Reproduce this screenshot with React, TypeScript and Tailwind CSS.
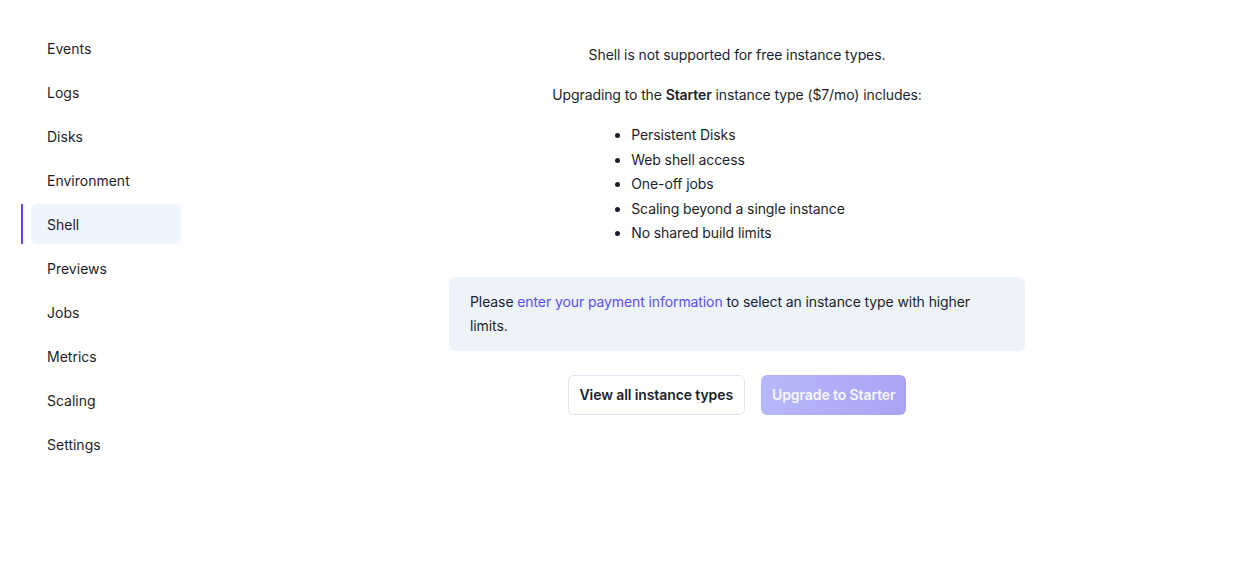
import React from 'react';

const navItems = [
  'Events',
  'Logs',
  'Disks',
  'Environment',
  'Shell',
  'Previews',
  'Jobs',
  'Metrics',
  'Scaling',
  'Settings',
];

const perks = [
  'Persistent Disks',
  'Web shell access',
  'One-off jobs',
  'Scaling beyond a single instance',
  'No shared build limits',
];

export default function App() {
  return (
    <div
      className="flex min-h-[571px] w-full bg-white text-[#1c1f2b]"
      style={{ fontFamily: 'Inter, "Noto Sans", sans-serif' }}
    >
      {/* sidebar */}
      <nav className="w-[235px] shrink-0 pl-[21px] pt-[28px]">
        <ul className="flex flex-col gap-1">
          {navItems.map((item) => {
            const active = item === 'Shell';
            return (
              <li key={item} className="flex h-10 items-stretch">
                <span className={active ? 'w-[2px] bg-[#5a45f5]' : 'w-[2px]'} />
                <a
                  className={
                    'ml-2 flex w-[150px] items-center rounded-md pl-4 text-[14px] ' +
                    (active ? 'bg-[#eff5ff]' : '')
                  }
                >
                  {item}
                </a>
              </li>
            );
          })}
        </ul>
      </nav>

      {/* main */}
      <main className="flex flex-1 flex-col items-center pt-[43px] text-[14px] tracking-[-0.1px]">
        <p className="leading-6">Shell is not supported for free instance types.</p>
        <p className="mt-4 leading-6">
          Upgrading to the <span className="font-semibold">Starter</span> instance type ($7/mo) includes:
        </p>
        <ul className="mt-4 ml-[-14px] list-disc pl-4 leading-[24.5px]">
          {perks.map((p) => (
            <li key={p} className="pl-[-2px]">{p}</li>
          ))}
        </ul>
        <div className="mt-[31px] w-[576px] rounded-md bg-[#eef2f9] px-[21px] py-[13px] leading-6">
          Please <a className="text-[#5a50f0]">enter your payment information</a> to select an instance type with
          higher limits.
        </div>
        <div className="mt-6 flex gap-4">
          <button className="h-10 rounded-md border border-[#dfe5f3] bg-white px-[11px] text-[14px] font-semibold">
            View all instance types
          </button>
          <button className="h-10 rounded-md bg-gradient-to-r from-[#b6b8fb] to-[#aaa4f4] px-[11px] text-[14px] font-semibold text-white/90">
            Upgrade to Starter
          </button>
        </div>
      </main>
    </div>
  );
}
